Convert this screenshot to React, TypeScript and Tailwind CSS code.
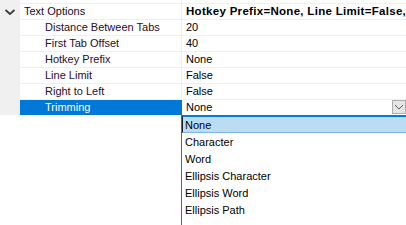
import React from "react";

const rows = [
  { name: "Distance Between Tabs", value: "20" },
  { name: "First Tab Offset", value: "40" },
  { name: "Hotkey Prefix", value: "None" },
  { name: "Line Limit", value: "False" },
  { name: "Right to Left", value: "False" },
];

const items = ["None", "Character", "Word", "Ellipsis Character", "Ellipsis Word", "Ellipsis Path"];

export default function App() {
  return (
    <div
      className="relative w-[406px] h-[225px] overflow-hidden bg-white text-[11px] leading-[15px] text-black"
      style={{ fontFamily: '"Liberation Sans", Arial, sans-serif' }}
    >
      {/* partial top row */}
      <div className="flex h-[4px] border-b border-[#f0f0f0]">
        <div className="w-[20px] bg-[#f0f0f0]" />
        <div className="w-[162px] border-r border-[#f0f0f0]" />
        <div className="flex-1" />
      </div>
      {/* category row */}
      <div className="flex h-[16px] border-b border-[#f0f0f0]">
        <div className="w-[20px] bg-[#f0f0f0] flex items-center justify-center">
          <svg width="20" height="15" viewBox="0 0 20 15">
            <path d="M5.5 6 L10 10 L14.5 6" fill="none" stroke="#404040" strokeWidth="1.9" />
          </svg>
        </div>
        <div className="w-[162px] border-r border-[#f0f0f0] pl-[4px] text-[#1e0b22]">Text Options</div>
        <div className="flex-1 pl-[4px] font-bold whitespace-nowrap overflow-hidden text-[11.5px] tracking-[0.3px]">
          Hotkey Prefix=None, Line Limit=False,
        </div>
      </div>
      {rows.map((r) => (
        <div key={r.name} className="flex h-[16px] border-b border-[#f0f0f0]">
          <div className="w-[20px] bg-[#f0f0f0]" />
          <div className="w-[162px] border-r border-[#f0f0f0] pl-[25px] text-[#2a0c2e]">{r.name}</div>
          <div className="flex-1 pl-[4px]">{r.value}</div>
        </div>
      ))}
      {/* selected row */}
      <div className="flex h-[15px]">
        <div className="w-[20px] bg-[#f0f0f0]" />
        <div className="w-[162px] bg-[#0078d7] pl-[25px] text-white">Trimming</div>
        <div className="flex-1 pl-[4px] flex justify-between">
          <span>None</span>
          <div className="w-[14px] h-[14px] bg-[#e5e5e5] border border-[#adadad] flex items-center justify-center">
            <svg width="10" height="8" viewBox="0 0 10 8">
              <path d="M1 2 L5 6 L9 2" fill="none" stroke="#606060" strokeWidth="1" />
            </svg>
          </div>
        </div>
      </div>
      {/* dropdown list */}
      <div className="absolute left-[181px] top-[115px] w-[240px] h-[130px] bg-white border border-[#646464]">
        {items.map((it, i) => (
          <div
            key={it}
            className={
              i === 0
                ? "h-[17px] leading-[16px] pl-[2px] bg-[#bcdcf4] border border-t-[#0078d7] border-l-[#1e1e1e] border-r-[#0078d7] border-b-[#7eb4ea]"
                : "h-[17px] leading-[19px] pl-[3px]"
            }
          >
            {it}
          </div>
        ))}
      </div>
    </div>
  );
}
